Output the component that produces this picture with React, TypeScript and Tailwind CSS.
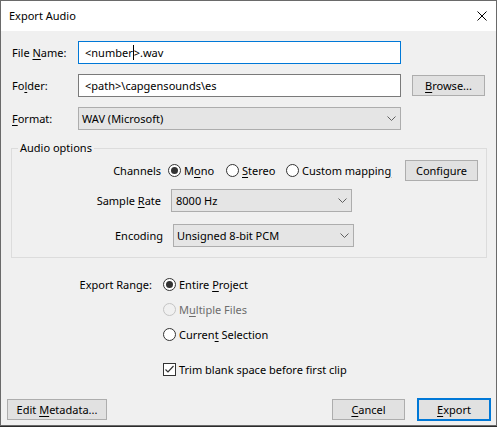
import React from 'react';
import clsx from 'clsx';

function U({ children }: { children: React.ReactNode }) {
  return <span className="underline underline-offset-2 decoration-1">{children}</span>;
}

function Radio({ checked, disabled }: { checked?: boolean; disabled?: boolean }) {
  return (
    <span
      className={clsx(
        'w-[13px] h-[13px] rounded-full border flex items-center justify-center shrink-0',
        disabled ? 'border-[#c4c4c4] bg-[#f0f0f0]' : 'border-[#333333] bg-white'
      )}
    >
      {checked && <span className="w-[7px] h-[7px] rounded-full bg-[#333333]" />}
    </span>
  );
}

function Checkbox() {
  return (
    <span className="w-[13px] h-[13px] border border-[#333333] bg-white flex items-center justify-center shrink-0">
      <svg width="11" height="11" viewBox="0 0 11 11">
        <path d="M1.5 5.5 L4 8 L9.5 2" fill="none" stroke="#333333" strokeWidth="1.2" />
      </svg>
    </span>
  );
}

function Chevron() {
  return (
    <svg width="9" height="5" viewBox="0 0 9 5">
      <path d="M0.5 0.5 L4.5 4.5 L8.5 0.5" fill="none" stroke="#606060" strokeWidth="1" />
    </svg>
  );
}

function Select({ value, className }: { value: string; className?: string }) {
  return (
    <div
      className={clsx(
        'h-[23px] bg-[#e5e5e5] border border-[#adadad] flex items-center justify-between pl-[3px] pr-[4px]',
        className
      )}
    >
      <span>{value}</span>
      <Chevron />
    </div>
  );
}

function Button({ children, className }: { children: React.ReactNode; className?: string }) {
  return (
    <div
      className={clsx(
        'h-[21px] bg-[#e1e1e1] border border-[#adadad] flex items-center justify-center',
        className
      )}
    >
      <span>{children}</span>
    </div>
  );
}

export default function App() {
  return (
    <div className="w-[497px] h-[427px] bg-[#2b2b2b] font-['Segoe_UI','Noto_Sans',sans-serif] text-[11px] leading-[16px] text-black">
      <div className="h-[426px] border border-[#6a6a6a] bg-[#f0f0f0] flex flex-col">
        {/* title bar */}
        <div className="h-[30px] bg-white flex items-center justify-between pl-[8px] pr-[9px]">
          <span>Export Audio</span>
          <svg width="10" height="10" viewBox="0 0 10 10">
            <path d="M0.5 0.5 L9.5 9.5 M9.5 0.5 L0.5 9.5" stroke="#000" strokeWidth="1" />
          </svg>
        </div>

        <div className="flex-1 flex flex-col">
          <div className="mt-[10px] flex items-center h-[23px]">
            <span className="pl-[11px] w-[77px]">
              File <U>N</U>ame:
            </span>
            <div className="w-[323px] h-[23px] border border-[#0078d7] bg-white flex items-center pl-[6px]">
              <span className="flex items-center">
                <span>&lt;number</span>
                <span className="w-px h-[15px] bg-black" />
                <span>&gt;.wav</span>
              </span>
            </div>
          </div>

          <div className="mt-[10px] flex items-center h-[23px]">
            <span className="pl-[11px] w-[77px]">
              Fo<U>l</U>der:
            </span>
            <div className="w-[323px] h-[23px] border border-[#7a7a7a] bg-white flex items-center pl-[6px]">
              <span>&lt;path&gt;\capgensounds\es</span>
            </div>
            <Button className="ml-[11px] w-[73px]">
              <U>B</U>rowse...
            </Button>
          </div>

          <div className="mt-[10px] flex items-center h-[23px]">
            <span className="pl-[11px] w-[77px]">
              <U>F</U>ormat:
            </span>
            <Select value="WAV (Microsoft)" className="w-[323px]" />
          </div>

          <fieldset className="mt-[10px] ml-[10px] mr-[9px] border border-[#dcdcdc] pb-[10px]">
            <legend className="ml-[6px] px-[2px]">Audio options</legend>

            <div className="mt-[4px] h-[21px] flex items-center">
              <span className="w-[149px] text-right">Channels</span>
              <div className="ml-[7px] w-[58px] flex items-center gap-[3px]">
                <Radio checked />
                <span>
                  M<U>o</U>no
                </span>
              </div>
              <div className="w-[60px] flex items-center gap-[3px]">
                <Radio />
                <span>
                  <U>S</U>tereo
                </span>
              </div>
              <div className="w-[119px] flex items-center gap-[3px]">
                <Radio />
                <span>
                  Custom mappin<U>g</U>
                </span>
              </div>
              <Button className="w-[73px]">Configure</Button>
            </div>

            <div className="mt-[8px] h-[23px] flex items-center">
              <span className="w-[149px] text-right">
                Sample <U>R</U>ate
              </span>
              <Select value="8000 Hz" className="ml-[10px] w-[181px] pl-[4px]" />
            </div>

            <div className="mt-[12px] h-[23px] flex items-center">
              <span className="w-[151px] text-right">Encoding</span>
              <Select value="Unsigned 8-bit PCM" className="ml-[10px] w-[181px] pl-[3px]" />
            </div>
          </fieldset>

          <div className="mt-[14px] flex">
            <span className="w-[151px] h-[25px] flex items-center justify-end">Export Range:</span>
            <div className="ml-[11px] flex flex-col">
              <div className="h-[25px] flex items-center gap-[3px]">
                <Radio checked />
                <span>
                  Entire <U>P</U>roject
                </span>
              </div>
              <div className="h-[25px] flex items-center gap-[3px] text-[#6d6d6d]">
                <Radio disabled />
                <span>
                  M<U>u</U>ltiple Files
                </span>
              </div>
              <div className="h-[25px] flex items-center gap-[3px]">
                <Radio />
                <span>
                  Curren<U>t</U> Selection
                </span>
              </div>
              <div className="mt-[10px] h-[25px] flex items-center gap-[3px]">
                <Checkbox />
                <span>Trim blank space before first clip</span>
              </div>
            </div>
          </div>

          <div className="flex-1" />

          <div className="h-[23px] mb-[4px] flex items-center">
            <Button className="ml-[6px] w-[100px]">
              Edit <U>M</U>etadata...
            </Button>
            <div className="flex-1" />
            <Button className="w-[73px]">
              <U>C</U>ancel
            </Button>
            <div className="ml-[12px] mr-[5px] w-[74px] h-[23px] bg-[#e1e1e1] border-2 border-[#0078d7] flex items-center justify-center">
              <span>
                <U>E</U>xport
              </span>
            </div>
          </div>
        </div>
      </div>
    </div>
  );
}
